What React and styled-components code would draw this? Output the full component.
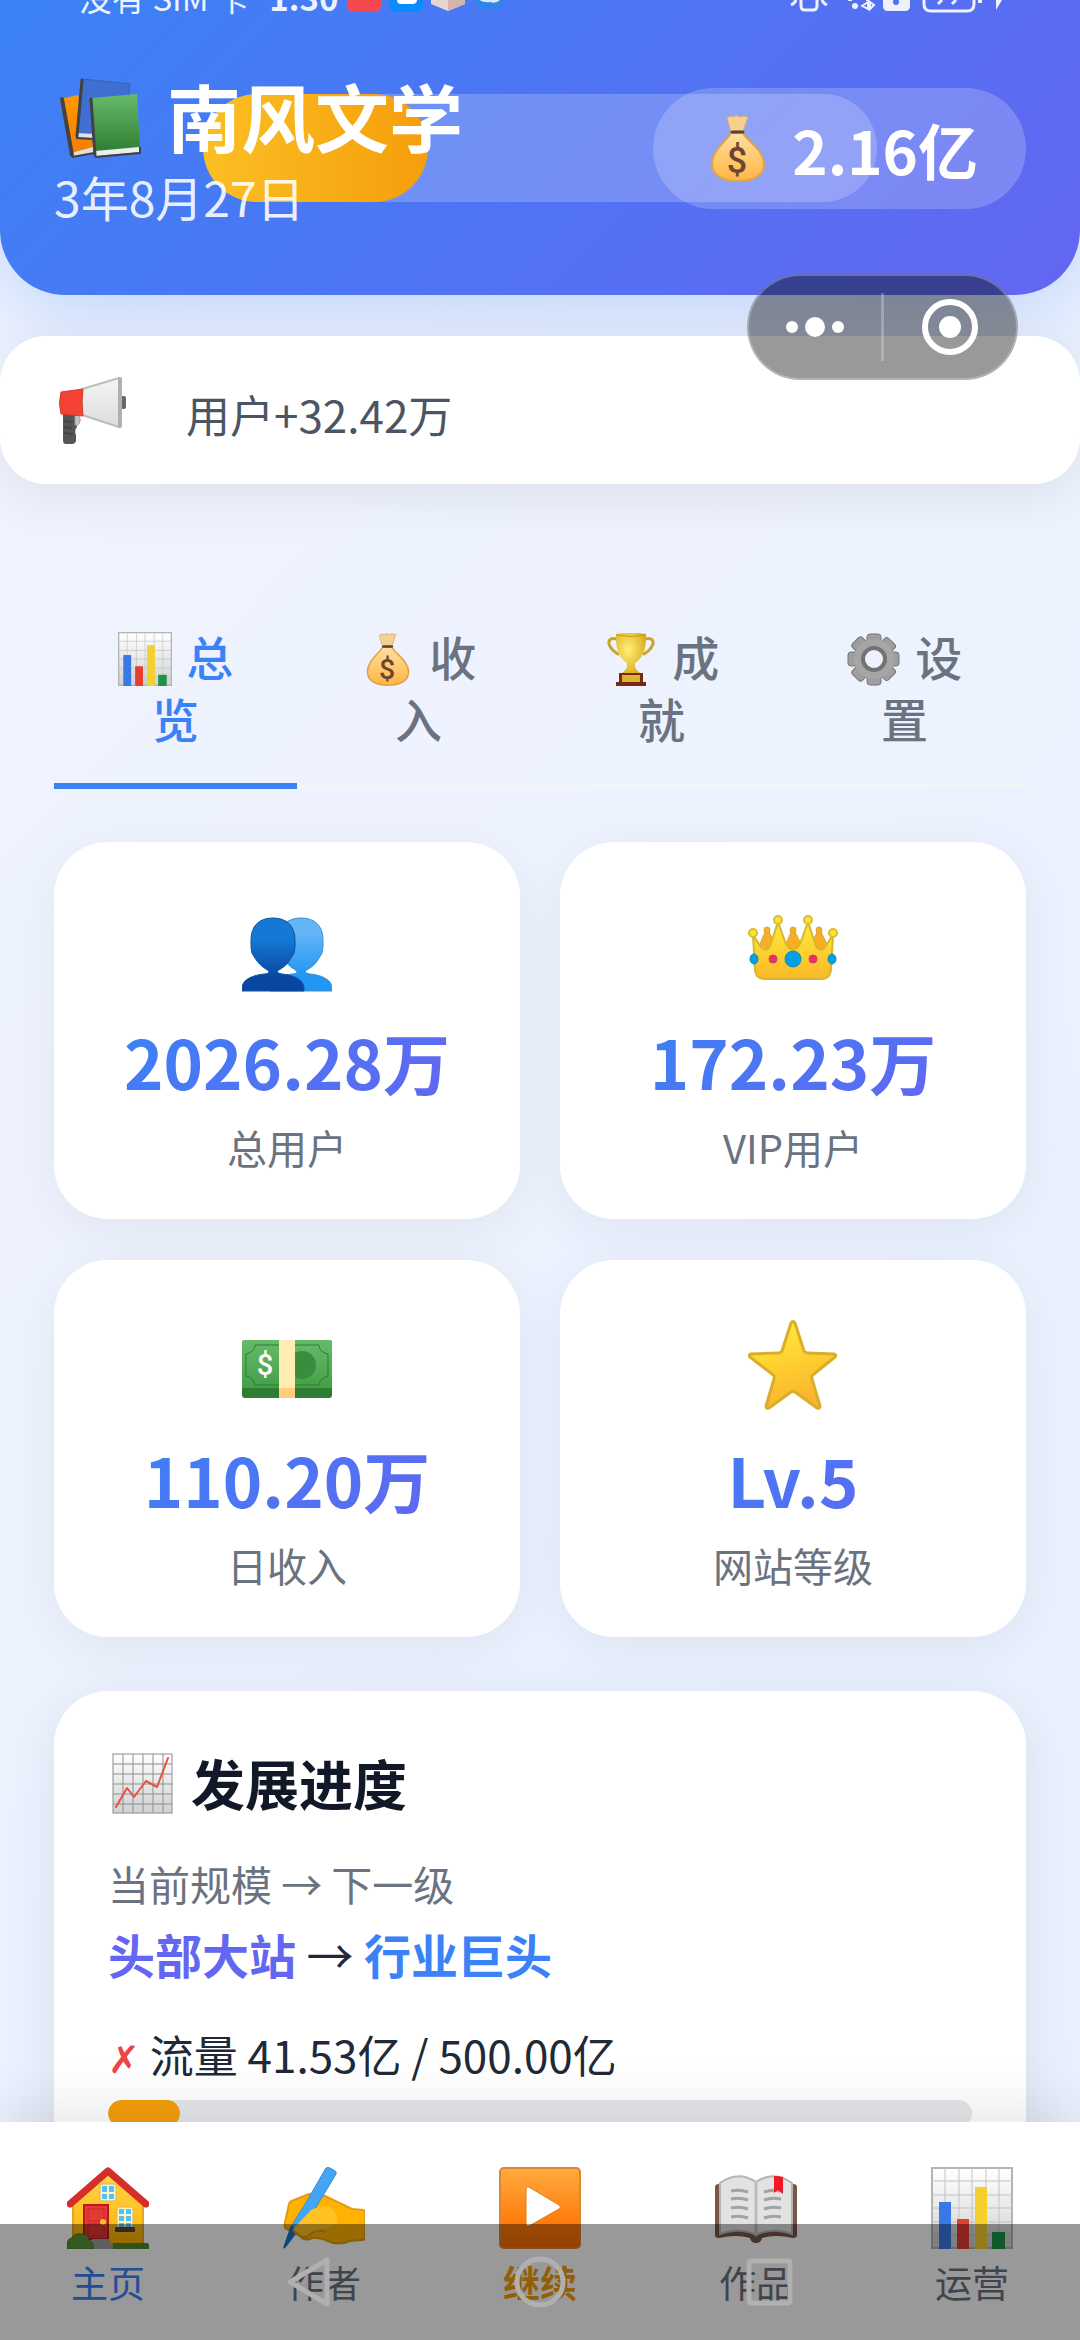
import React, { useState } from "react";

import styled, { createGlobalStyle } from "styled-components";

const GlobalStyle = createGlobalStyle`
  * {
    box-sizing: border-box;
  }

  body {
    margin: 0;
    font-family: "Noto Sans CJK SC", "Noto Sans", sans-serif;
    color: #1f2937;
  }

  h1, h2, p, dl, dd, dt {
    margin: 0;
    font-weight: normal;
  }

  button {
    margin: 0;
    border: 0;
    background: none;
    font-family: inherit;
    cursor: pointer;
  }
`;

const Shell = styled.div`
  position: relative;
  display: flex;
  flex-direction: column;
  height: 100vh;
  overflow: hidden;
  background: linear-gradient(135deg, #f0f4ff 0%, #e8f0fe 100%);
`;

const Scroller = styled.div`
  flex: 1;
  min-height: 0;
  overflow-y: auto;
  scrollbar-width: none;
`;

/* header */

const Header = styled.header`
  position: relative;
  display: flex;
  align-items: center;
  justify-content: space-between;
  padding: 67px 54px 66px;
  border-radius: 0 0 65px 65px;
  background: linear-gradient(135deg, #3b82f6 0%, #6366f1 100%);
  box-shadow: 0 11px 86px rgba(59, 130, 246, 0.3);
`;

const LevelTrack = styled.div`
  position: absolute;
  top: 94px;
  left: 50%;
  width: 674px;
  height: 108px;
  border-radius: 54px;
  background: rgba(255, 255, 255, 0.2);
  transform: translateX(-50%);
  overflow: hidden;
`;

const LevelFill = styled.div`
  height: 100%;
  border-radius: 54px;
  background: linear-gradient(90deg, #fbbf24, #f59e0b);
`;

const SiteInfo = styled.div`
  position: relative;
  padding-bottom: 6px;
`;

const SiteName = styled.h1`
  display: flex;
  align-items: center;
  gap: 26px;
  padding-left: 5px;
  font-size: 74px;
  font-weight: 700;
  line-height: 96px;
  color: #fff;

  span {
    padding-bottom: 6px;
  }
`;

const GameDate = styled.p`
  font-size: 48px;
  line-height: 54px;
  color: rgba(255, 255, 255, 0.9);
`;

const Balance = styled.div`
  position: relative;
  display: flex;
  align-items: center;
  gap: 27px;
  height: 121px;
  padding: 0 48px 0 58px;
  border-radius: 61px;
  background: rgba(255, 255, 255, 0.2);
  font-size: 60px;
  font-weight: 700;
  color: #fff;
`;

/* notice */

const Notice = styled.section`
  position: relative;
  display: flex;
  align-items: center;
  gap: 60px;
  min-height: 148px;
  margin-top: 41px;
  padding: 0 58px;
  border-radius: 46px;
  background: #fff;
  box-shadow: 0 11px 54px rgba(0, 0, 0, 0.08);
  font-size: 44px;
  color: #4b5563;

  p {
    padding-top: 8px;
  }
`;

const Content = styled.main`
  padding: 112px 54px 54px;
`;

/* tabs */

const TabList = styled.div`
  display: flex;
  border-bottom: 5px solid #f3f4f6;
`;

const Tab = styled.button`
  flex: 1;
  margin-bottom: -6px;
  padding: 29px 42px 34px;
  border-bottom: 6px solid ${({ $active }) => ($active ? "#3b82f6" : "transparent")};
  font-size: 47px;
  font-weight: 500;
  line-height: 62px;
  text-align: center;
  color: ${({ $active }) => ($active ? "#3b82f6" : "#6b7280")};

  svg {
    margin-right: 4px;
    vertical-align: -10px;
  }
`;

/* stats */

const StatGrid = styled.dl`
  display: grid;
  grid-template-columns: 1fr 1fr;
  gap: 41px 40px;
  margin-top: 54px;
`;

const StatCard = styled.div`
  display: flex;
  flex-direction: column;
  align-items: center;
  padding: 60px 54px 44px;
  border-radius: 54px;
  background: #fff;
  box-shadow: 0 11px 54px rgba(0, 0, 0, 0.06);
`;

const StatLabel = styled.dt`
  order: 3;
  margin-top: 19px;
  font-size: 40px;
  line-height: 56px;
  color: #6b7280;
`;

const StatValue = styled.dd`
  order: 2;
  align-self: stretch;
  margin-top: 30px;
  font-size: 67px;
  font-weight: 700;
  line-height: 78px;
  text-align: center;
  background: linear-gradient(135deg, #3b82f6 0%, #6366f1 100%);
  background-clip: text;
  color: transparent;
`;

/* progress card */

const ProgressCard = styled.section`
  margin-top: 54px;
  padding: 54px;
  border-radius: 54px;
  background: #fff;
  box-shadow: 0 11px 54px rgba(0, 0, 0, 0.08);
`;

const CardTitle = styled.h2`
  display: flex;
  align-items: center;
  gap: 18px;
  padding-left: 4px;
  font-size: 54px;
  font-weight: 700;
  line-height: 76px;
  color: #111827;
`;

const ScaleHint = styled.p`
  margin-top: 32px;
  font-size: 41px;
  line-height: 60px;
  color: #6b7280;
`;

const ScaleRow = styled.p`
  margin-top: 7px;
  font-size: 47px;
  line-height: 68px;
`;

const ScaleName = styled.strong`
  font-weight: 700;
  color: ${({ $next }) => ($next ? "#3b82f6" : "#6366f1")};
`;

const Requirement = styled.p`
  margin-top: 34px;
  font-size: 44px;
  line-height: 64px;
`;

const Cross = styled.span`
  font-family: "DejaVu Sans", sans-serif;
  font-size: 38px;
  line-height: 1;
  color: #ef4444;
`;

const Track = styled.div`
  height: 27px;
  margin-top: 14px;
  border-radius: 14px;
  background: #e5e7eb;
  overflow: hidden;
`;

const TrackFill = styled.div`
  height: 100%;
  border-radius: 14px;
  background: #f59e0b;
`;

/* bottom navigation */

const BottomNav = styled.nav`
  position: relative;
  display: flex;
  padding: 45px 0 31px;
  background: #fff;
  box-shadow: 0 -11px 54px rgba(0, 0, 0, 0.1);
`;

const navColors = { active: "#3b82f6", accent: "#f59e0b" };

const NavButton = styled.button`
  flex: 1;
  display: flex;
  flex-direction: column;
  align-items: center;
  gap: 6px;
  padding: 0;
  font-size: 37px;
  font-weight: ${({ $tone }) => ($tone === "accent" ? 700 : 400)};
  line-height: 54px;
  color: ${({ $tone }) => navColors[$tone] || "#6b7280"};
`;

/* system overlays */

const StatusBar = styled.div`
  position: absolute;
  top: 0;
  left: 0;
  right: 0;
  display: flex;
  align-items: flex-end;
  justify-content: space-between;
  height: 18px;
  padding: 0 76px 0 79px;
  overflow: hidden;
  font-size: 33px;
  line-height: 42px;
  white-space: nowrap;
  color: rgba(255, 255, 255, 0.92);

  svg {
    flex: none;
  }
`;

const StatusGroup = styled.div`
  display: flex;
  align-items: flex-end;
  gap: 9px;
`;

const Clock = styled.b`
  margin-left: 13px;
`;

const Capsule = styled.div`
  position: absolute;
  top: 274px;
  right: 62px;
  display: flex;
  align-items: center;
  width: 271px;
  height: 106px;
  border: 2px solid rgba(255, 255, 255, 0.25);
  border-radius: 53px;
  background: rgba(0, 0, 0, 0.4);
`;

const CapsuleButton = styled.button`
  flex: 1;
  display: flex;
  justify-content: center;
  padding: 0;

  & + & {
    border-left: 3px solid rgba(255, 255, 255, 0.25);
    height: 68px;
    align-items: center;
  }
`;

const SystemNav = styled.div`
  position: absolute;
  bottom: 0;
  left: 0;
  right: 0;
  display: flex;
  align-items: center;
  justify-content: center;
  gap: 178px;
  height: 116px;
  background: rgba(0, 0, 0, 0.4);
`;

const SystemButton = styled.button`
  padding: 0;
  line-height: 0;
`;

/* icons */

const Dollar = ({ x, y, size, fill }) => (
  <text
    x={x}
    y={y}
    fontSize={size}
    fontFamily="Roboto, sans-serif"
    fontWeight="500"
    textAnchor="middle"
    fill={fill}
  >
    $
  </text>
);

const Books = () => (
  <svg width="82" height="80" viewBox="0 0 82 80">
    <defs>
      <linearGradient id="bookOrange" x2="0" y2="1">
        <stop offset="0" stopColor="#ff9800" />
        <stop offset="1" stopColor="#f57c00" />
      </linearGradient>
      <linearGradient id="bookGreen" x2="0" y2="1">
        <stop offset="0" stopColor="#66bb6a" />
        <stop offset="1" stopColor="#2e7d32" />
      </linearGradient>
    </defs>
    <path d="M1 21l18-4 16 52-21 9-2-1z" fill="url(#bookOrange)" />
    <path d="M12 75l22-6v6l-20 4z" fill="#e0e0e0" />
    <path d="M3 21l10 56" stroke="#424242" strokeWidth="4" strokeLinecap="round" />
    <path d="M13 79l22-4" stroke="#424242" strokeWidth="2" />
    <path d="M24 1l47 5-5 54-47-4z" fill="#3f6fd0" stroke="#3462ba" strokeWidth="1" />
    <path d="M18 55l18 1v4l-18-1z" fill="#e0e0e0" />
    <path d="M23 2l-5 56" stroke="#424242" strokeWidth="3" strokeLinecap="round" />
    <path d="M17 60l17 1" stroke="#424242" strokeWidth="2" />
    <path d="M33 20l45-4 3 54-44 5z" fill="url(#bookGreen)" />
    <path d="M36 73l44-4v5l-43 4z" fill="#eee" />
    <path d="M32 21l4 56" stroke="#424242" strokeWidth="3" strokeLinecap="round" />
    <path d="M36 79l45-4v-6" stroke="#424242" strokeWidth="2" fill="none" />
  </svg>
);

const MoneyBag = ({ width, height }) => (
  <svg width={width} height={height} viewBox="0 0 54 67">
    <defs>
      <linearGradient id="bag" x2="0" y2="1">
        <stop offset="0" stopColor="#ffe0a0" />
        <stop offset="1" stopColor="#ffb545" />
      </linearGradient>
    </defs>
    <path
      d="M20 17L16 3q3-3 6-1 4-3 7 0 4-2 8 0l-5 14z"
      fill="#f5d08e"
      stroke="#d9b06c"
      strokeWidth="1"
    />
    <path
      d="M20 18h12c4 8 21 17 21 31 0 11-10 17-26 17S1 60 1 49c0-14 15-23 19-31z"
      fill="url(#bag)"
      stroke="#dfa545"
      strokeWidth="2"
    />
    <path d="M21 17h11" stroke="#5d4037" strokeWidth="3" strokeLinecap="round" />
    <Dollar x={26} y={58} size={36} fill="#6d4630" />
  </svg>
);

const Megaphone = () => (
  <svg width="68" height="67" viewBox="0 0 68 67">
    <defs>
      <linearGradient id="cone" x2="0" y2="1">
        <stop offset="0" stopColor="#f5f5f5" />
        <stop offset="1" stopColor="#dcdcdc" />
      </linearGradient>
    </defs>
    <path d="M5 36h13l1 14q-3 3-1 8v6q-1 3-4 3H8q-3 0-3-4z" fill="#555" />
    <path d="M6 44l9 1M6 50l8 1M6 56l9 1" stroke="#444" strokeWidth="2" />
    <path d="M17 38q6 0 5 6-1 5-5 4z" fill="#c4c4c4" stroke="#999" strokeWidth="1" />
    <rect x="63" y="19" width="5" height="13" rx="2" fill="#666" />
    <path d="M24 12L61 1v49L24 38z" fill="url(#cone)" stroke="#bdbdbd" strokeWidth="2" />
    <path d="M3 15l22-3q-2 13 0 27L3 37q-3-11 0-22z" fill="#f44336" stroke="#d8392e" strokeWidth="1" />
    <rect x="60" y="0" width="4" height="51" rx="2" fill="#b0b0b0" />
  </svg>
);

const BarChart = ({ size }) => (
  <svg width={size} height={size} viewBox="0 0 82 82">
    <defs>
      <linearGradient id="paper" x2="0" y2="1">
        <stop offset="0" stopColor="#fff" />
        <stop offset="1" stopColor="#d0d1d2" />
      </linearGradient>
    </defs>
    <rect x="1" y="1" width="80" height="80" fill="url(#paper)" stroke="#b4b4b4" strokeWidth="2" />
    <path
      d="M14 1v80M28 1v80M41 1v80M55 1v80M68 1v80M1 14h80M1 28h80M1 41h80M1 55h80M1 68h80"
      stroke="#c2c2c2"
      strokeWidth="1"
    />
    <path d="M8 35h12v47H8z" fill="#3b78e7" />
    <path d="M26 52h12v30H26z" fill="#e53f2f" />
    <path d="M44 20h12v62H44z" fill="#f4cf2e" />
    <path d="M61 65h13v17H61z" fill="#1f9446" />
  </svg>
);

const RisingChart = () => (
  <svg width="61" height="61" viewBox="0 0 61 61">
    <rect x="1" y="1" width="59" height="59" fill="url(#paper)" stroke="#8c8c8c" strokeWidth="1" />
    <path
      d="M11 1v59M21 1v59M31 1v59M41 1v59M51 1v59M1 11h59M1 21h59M1 31h59M1 41h59M1 51h59"
      stroke="#8f8f8f"
      strokeWidth="1"
    />
    <path
      d="M4 54l11-19 7 9 12-16 11 6L56 5"
      fill="none"
      stroke="#e5533f"
      strokeWidth="2"
      strokeLinecap="round"
      strokeLinejoin="round"
    />
  </svg>
);

const Trophy = () => (
  <svg width="54" height="53" viewBox="0 0 54 53">
    <defs>
      <radialGradient id="cup" cx="0.4" cy="0.4" r="0.7">
        <stop offset="0" stopColor="#fff176" />
        <stop offset="1" stopColor="#d9a514" />
      </radialGradient>
    </defs>
    <path
      d="M13 6Q4 4 5 11q2 6 9 10M41 6q9-2 8 5-2 6-9 10"
      fill="none"
      stroke="#c9a52e"
      strokeWidth="3"
      strokeLinecap="round"
    />
    <path d="M12 1q15-3 30 0 1 21-11 29v4q1 3 5 6v2H18v-2q4-3 5-6v-4Q11 22 12 1z" fill="url(#cup)" />
    <path d="M12 2q15 3 30 0" stroke="#c79a20" strokeWidth="1" fill="none" />
    <path d="M15 40h24v9h3v4H12v-4h3z" fill="#7a2a12" />
    <path d="M18 42h18v7H18z" fill="#d9b232" />
  </svg>
);

const Gear = () => (
  <svg width="54" height="53" viewBox="0 0 54 53">
    <g fill="#9e9e9e" stroke="#757575" strokeWidth="1">
      {[0, 45, 90, 135].map((angle) => (
        <rect
          key={angle}
          x="20"
          y="1"
          width="14"
          height="51"
          rx="3"
          transform={`rotate(${angle} 27 26)`}
        />
      ))}
    </g>
    <circle cx="27" cy="26" r="20" fill="#a6a6a6" />
    <circle cx="27" cy="26" r="11" fill="#eef2ff" stroke="#737373" strokeWidth="4" />
  </svg>
);

const personPath =
  "M0 89v-3c0-9 12-13 22-14q5 0 5-3c-7-4-11-8-14-13Q9 52 9 45v-7C9 24 17 16 31 16s22 8 22 22v7q0 7-4 11c-3 6-8 10-14 13q1 3 5 3c12 1 22 6 22 14v3z";

const People = () => (
  <svg width="90" height="90" viewBox="0 0 90 90">
    <defs>
      <linearGradient id="personFront" x2="0" y2="1">
        <stop offset="0.3" stopColor="#1478d4" />
        <stop offset="0.8" stopColor="#0747a1" />
      </linearGradient>
      <linearGradient id="personBack" x2="0" y2="1">
        <stop offset="0.2" stopColor="#64b5f6" />
        <stop offset="0.8" stopColor="#2196f3" />
      </linearGradient>
    </defs>
    <path d={personPath} transform="translate(28 0)" fill="url(#personBack)" stroke="#3f8fd0" strokeWidth="1" />
    <path d={personPath} fill="url(#personFront)" stroke="#0b55a5" strokeWidth="1" />
  </svg>
);

const Crown = () => (
  <svg width="90" height="90" viewBox="0 0 90 90">
    <defs>
      <linearGradient id="crown" x2="0" y2="1">
        <stop offset="0" stopColor="#ffeb3b" />
        <stop offset="1" stopColor="#fbb829" />
      </linearGradient>
    </defs>
    <g fill="#f9ae25" stroke="#dfa32a" strokeWidth="1">
      <path d="M12 42l5-12q2-2 4 0l6 12-8 6zM38 42l5-12q2-2 4 0l6 12-8 6zM64 42l5-12q2-2 4 0l6 12-8 6z" />
      <circle cx="19" cy="28" r="3" />
      <circle cx="45" cy="28" r="3" />
      <circle cx="71" cy="28" r="3" />
    </g>
    <path
      d="M5 33l8 12q5 6 9-1l8-24 8 22q7 11 14 0l8-22 8 24q4 7 9 1l8-12-2 35q-1 9-9 9H16q-8 0-9-9z"
      fill="url(#crown)"
      stroke="#d9b52c"
      strokeWidth="2"
      strokeLinejoin="round"
    />
    <g fill="#fde03a" stroke="#d9bf2f" strokeWidth="2">
      <circle cx="5" cy="31" r="4" />
      <circle cx="30" cy="18" r="4" />
      <circle cx="60" cy="18" r="4" />
      <circle cx="85" cy="31" r="4" />
    </g>
    <circle cx="45" cy="57" r="8" fill="#03a0e5" stroke="#0f8fb5" strokeWidth="1" />
    <circle cx="25" cy="57" r="4" fill="#ec2f6b" stroke="#c9405a" strokeWidth="1" />
    <circle cx="65" cy="57" r="4" fill="#ec2f6b" stroke="#c9405a" strokeWidth="1" />
    <ellipse cx="6" cy="57" rx="4" ry="5" fill="#03a0e5" stroke="#0f8fb5" strokeWidth="1" />
    <ellipse cx="84" cy="57" rx="4" ry="5" fill="#03a0e5" stroke="#0f8fb5" strokeWidth="1" />
  </svg>
);

const Banknote = () => (
  <svg width="90" height="90" viewBox="0 0 90 90">
    <defs>
      <linearGradient id="note" x2="0" y2="1">
        <stop offset="0" stopColor="#66bb6a" />
        <stop offset="1" stopColor="#43a047" />
      </linearGradient>
    </defs>
    <rect y="20" width="90" height="58" rx="3" fill="#2e7d32" />
    <path d="M0 68V23q0-3 3-3h84q3 0 3 3v45z" fill="url(#note)" />
    <path
      d="M13 25h64q0 7 9 9v22q-8 2-9 9H13q-1-7-9-9V34q9-2 9-9z"
      fill="none"
      stroke="#2e7d32"
      strokeWidth="1"
    />
    <circle cx="60" cy="45" r="14" fill="#388e3c" />
    <path d="M37 20h16v48H37z" fill="#ffecb3" />
    <path d="M37 68h16v10H37z" fill="#ffcc80" />
    <Dollar x={23} y={55} size={29} fill="#fff" />
  </svg>
);

const Star = () => (
  <svg width="90" height="90" viewBox="0 0 90 90">
    <defs>
      <linearGradient id="star" x2="0.3" y2="1">
        <stop offset="0.2" stopColor="#ffe536" />
        <stop offset="1" stopColor="#fcb52b" />
      </linearGradient>
    </defs>
    <path
      d="M43 3q2-3 4 0l9 28q1 2 4 2l26 1q3 1 1 3L66 54q-3 2-2 5l8 27q0 3-3 2L47 72q-2-1-4 0L21 88q-3 1-3-2l8-27q1-3-2-5L2 37q-2-2 1-3l27-1q3 0 4-2z"
      fill="url(#star)"
      stroke="#daae2a"
      strokeWidth="3"
      strokeLinejoin="round"
    />
  </svg>
);

const House = () => (
  <svg width="82" height="82" viewBox="0 0 82 82">
    <defs>
      <linearGradient id="wall" x2="0" y2="1">
        <stop offset="0" stopColor="#ffd54f" />
        <stop offset="1" stopColor="#ffb300" />
      </linearGradient>
    </defs>
    <path d="M6 34L41 5l35 29v43H6z" fill="url(#wall)" stroke="#e0a526" strokeWidth="2" />
    <path d="M3 37L41 4l38 33" fill="none" stroke="#d62f2a" strokeWidth="7" strokeLinecap="round" strokeLinejoin="round" />
    <rect x="33" y="17" width="16" height="17" rx="2" fill="#fff3c4" stroke="#d6b460" strokeWidth="1" />
    <path d="M35 19h5v6h-5zM42 19h5v6h-5zM35 27h5v5h-5zM42 27h5v5h-5z" fill="#4fc3f7" />
    <rect x="17" y="38" width="24" height="34" fill="#e53935" stroke="#b71c1c" strokeWidth="2" />
    <path d="M21 42h16v12H21zM21 57h16v12H21z" fill="none" stroke="#c62828" strokeWidth="1" />
    <circle cx="36" cy="55" r="3" fill="#fbc02d" />
    <rect x="50" y="40" width="16" height="22" rx="2" fill="#fff3c4" stroke="#d6b460" strokeWidth="1" />
    <path d="M52 42h5v5h-5zM59 42h5v5h-5zM52 49h5v5h-5zM59 49h5v5h-5zM52 56h5v4h-5zM59 56h5v4h-5z" fill="#4fc3f7" />
    <rect x="48" y="60" width="20" height="5" rx="1" fill="#5d4037" />
    <path d="M24 76h56q2 0 2 3v3H24z" fill="#4b8b2b" />
    <path d="M25 72h18v4h3v6H24z" fill="#9e9e9e" />
    <path d="M0 82v-5q1-6 5-6 3-5 9-4 7 0 8 6 5 2 4 9z" fill="#5c9437" stroke="#3f7a27" strokeWidth="1" />
  </svg>
);

const WritingHand = () => (
  <svg width="82" height="82" viewBox="0 0 82 82">
    <path
      d="M2 61q-1-4 1-10l3-14q1-3 5-4l15-6q8-1 16 2l27 13 11 1q2 0 2 3v25q0 2-3 2l-12 1q-12 5-22 0-13-5-18-2-6 2-11-4z"
      fill="#ffb300"
      stroke="#e39c10"
      strokeWidth="2"
    />
    <path d="M43 1q2-1 4 0l5 3q2 1 1 3L32 42 15 64 8 60q5-9 13-21z" fill="#42a5f5" stroke="#3a8cd0" strokeWidth="1" />
    <path d="M8 58l8 5L3 80q-4 4-2-2z" fill="#1478c8" />
    <path
      d="M10 62l18-19q9-5 19-3 9 7 7 17l-12 5q-12-1-18 7-9-1-14-7z"
      fill="#ffc222"
    />
    <path d="M10 63q6 8 14 7 9-9 19-5" fill="none" stroke="#e39c10" strokeWidth="2" />
  </svg>
);

const Play = () => (
  <svg width="82" height="82" viewBox="0 0 82 82">
    <defs>
      <linearGradient id="play" x2="0" y2="1">
        <stop offset="0" stopColor="#ffab40" />
        <stop offset="0.7" stopColor="#ff7a0a" />
        <stop offset="1" stopColor="#f56a00" />
      </linearGradient>
    </defs>
    <rect x="1" y="1" width="80" height="80" rx="4" fill="url(#play)" stroke="#d88632" strokeWidth="2" />
    <path d="M27 22q0-3 3-2l30 18q3 2 0 4L30 59q-3 1-3-2z" fill="#fff" stroke="#e07a1a" strokeWidth="1" />
  </svg>
);

const OpenBook = () => (
  <svg width="82" height="82" viewBox="0 0 82 82">
    <path d="M0 20q0-3 4-3h74q4 0 4 3v48q0 3-4 3-18-4-31 0-1 5-6 5t-6-5q-13-4-31 0-4 0-4-3z" fill="#795548" />
    <path d="M5 16q18-13 36-1v53q-16-8-36-1zM77 16q-18-13-36-1v53q16-8 36-1z" fill="#e2e2e2" stroke="#b5b5b5" strokeWidth="2" />
    <path d="M41 16v52" stroke="#bdbdbd" strokeWidth="3" />
    <path
      d="M16 24q9-2 17 1M16 32q9-2 17 1M16 41q9-2 17 1M16 50q9-2 17 1M49 25q8-3 17-1M49 33q8-3 17-1M49 42q8-3 17-1M49 51q8-3 17-1"
      fill="none"
      stroke="#a3a3a3"
      strokeWidth="3"
    />
    <path d="M59 9q5 0 9 1v17l-5-4-4 3z" fill="#f01824" />
  </svg>
);

const StatusApps = () => (
  <svg width="160" height="18" viewBox="0 0 160 18">
    <path d="M0 0h34v5q0 7-7 7H7q-7 0-7-7z" fill="#f5484f" />
    <path d="M42 0h34v5q0 7-7 7H49q-7 0-7-7z" fill="#0a8cff" />
    <path d="M50 0h20q0 4-5 4H54q-4 0-4-4z" fill="#fff" />
    <path d="M84 0h34v4l-17 7-17-7z" fill="#ead6d0" />
    <path d="M101 0h17v4l-17 7z" fill="#d3b5ac" />
    <path d="M128 0h29q0 9-8 9h-13q-8 0-8-9z" fill="#2f86ea" />
    <path d="M132 0q6 3 11 2 6 2 10-2z" fill="#dcebff" />
  </svg>
);

const StatusSignals = () => (
  <svg width="214" height="18" viewBox="0 0 214 18" fill="none" stroke="#eef1ff" strokeWidth="3">
    <path d="M11 0v6q0 4 4 4h8q4 0 4-4V0M6 0q-1 3-5 5M32 0q1 3 5 5" />
    <path d="M58 0h4M76 0h3M72 6l6-4v7zM84 5l-4-3v7z" strokeWidth="2" />
    <circle cx="65" cy="6" r="3" fill="#eef1ff" stroke="none" />
    <path d="M93 0h27v6q0 5-5 5H98q-5 0-5-5z" fill="#eef1ff" stroke="none" />
    <circle cx="106" cy="2" r="3" fill="#4f70f3" stroke="none" />
    <path d="M134 0v4q0 7 7 7h36q7 0 7-7V0M148 4l4-4M162 4l4-4" />
    <path d="M190 0v3" strokeWidth="4" />
    <path d="M206 0h6l-6 10z" fill="#eef1ff" stroke="none" />
  </svg>
);

const tabs = [
  { id: "overview", label: "总览", icon: <BarChart size={54} /> },
  { id: "income", label: "收入", icon: <MoneyBag width={54} height={53} /> },
  { id: "achievements", label: "成就", icon: <Trophy /> },
  { id: "settings", label: "设置", icon: <Gear /> },
];

const stats = [
  { label: "总用户", value: "2026.28万", icon: <People /> },
  { label: "VIP用户", value: "172.23万", icon: <Crown /> },
  { label: "日收入", value: "110.20万", icon: <Banknote /> },
  { label: "网站等级", value: "Lv.5", icon: <Star /> },
];

const navItems = [
  { label: "主页", icon: <House />, tone: "active" },
  { label: "作者", icon: <WritingHand /> },
  { label: "继续", icon: <Play />, tone: "accent" },
  { label: "作品", icon: <OpenBook /> },
  { label: "运营", icon: <BarChart size={82} /> },
];

const traffic = { current: 41.53, target: 500 };

const App = () => {
  const [activeTab, setActiveTab] = useState("overview");
  const trafficPercent = (traffic.current / traffic.target) * 100;

  return (
    <Shell>
      <GlobalStyle />
      <Scroller>
        <Header>
          <LevelTrack>
            <LevelFill style={{ width: `${(1 / 3) * 100}%` }} />
          </LevelTrack>
          <SiteInfo>
            <SiteName>
              <Books />
              <span>南风文学</span>
            </SiteName>
            <GameDate>3年8月27日</GameDate>
          </SiteInfo>
          <Balance>
            <MoneyBag width={54} height={67} />
            <span>2.16亿</span>
          </Balance>
        </Header>

        <Notice>
          <Megaphone />
          <p>用户+32.42万</p>
        </Notice>

        <Content>
          <TabList role="tablist">
            {tabs.map((tab) => (
              <Tab
                key={tab.id}
                role="tab"
                aria-selected={activeTab === tab.id}
                $active={activeTab === tab.id}
                onClick={() => setActiveTab(tab.id)}
              >
                {tab.icon} {tab.label}
              </Tab>
            ))}
          </TabList>

          <StatGrid>
            {stats.map((stat) => (
              <StatCard key={stat.label}>
                {stat.icon}
                <StatLabel>{stat.label}</StatLabel>
                <StatValue>{stat.value}</StatValue>
              </StatCard>
            ))}
          </StatGrid>

          <ProgressCard>
            <CardTitle>
              <RisingChart />
              发展进度
            </CardTitle>
            <ScaleHint>当前规模 → 下一级</ScaleHint>
            <ScaleRow>
              <ScaleName>头部大站</ScaleName> → <ScaleName $next>行业巨头</ScaleName>
            </ScaleRow>
            <Requirement>
              <Cross>✗</Cross> 流量 {traffic.current.toFixed(2)}亿 / {traffic.target.toFixed(2)}亿
            </Requirement>
            <Track>
              <TrackFill style={{ width: `${trafficPercent}%` }} />
            </Track>
          </ProgressCard>
        </Content>
      </Scroller>

      <BottomNav>
        {navItems.map((item) => (
          <NavButton key={item.label} $tone={item.tone}>
            {item.icon}
            {item.label}
          </NavButton>
        ))}
      </BottomNav>

      <StatusBar>
        <StatusGroup>
          <span>
            没有 SIM 卡 <Clock>1:30</Clock>
          </span>
          <StatusApps />
        </StatusGroup>
        <StatusSignals />
      </StatusBar>

      <Capsule>
        <CapsuleButton aria-label="更多">
          <svg width="60" height="22" viewBox="0 0 60 22" fill="#fff">
            <circle cx="7" cy="11" r="6" />
            <circle cx="30" cy="11" r="10" />
            <circle cx="53" cy="11" r="6" />
          </svg>
        </CapsuleButton>
        <CapsuleButton aria-label="关闭">
          <svg width="58" height="58" viewBox="0 0 58 58">
            <circle cx="29" cy="29" r="25" fill="none" stroke="#fff" strokeWidth="6" />
            <circle cx="29" cy="29" r="11" fill="#fff" />
          </svg>
        </CapsuleButton>
      </Capsule>

      <SystemNav>
        <SystemButton aria-label="返回">
          <svg width="52" height="52" viewBox="0 0 52 52" fill="none" stroke="#b0b0b0" strokeWidth="5" strokeLinejoin="round">
            <path d="M43 4v44L6 26z" />
          </svg>
        </SystemButton>
        <SystemButton aria-label="桌面">
          <svg width="52" height="52" viewBox="0 0 52 52" fill="none" stroke="#b0b0b0" strokeWidth="5">
            <circle cx="26" cy="26" r="23" />
          </svg>
        </SystemButton>
        <SystemButton aria-label="最近任务">
          <svg width="52" height="52" viewBox="0 0 52 52" fill="none" stroke="#b0b0b0" strokeWidth="5">
            <rect x="5" y="5" width="41" height="42" rx="2" />
          </svg>
        </SystemButton>
      </SystemNav>
    </Shell>
  );
};

export default App;
